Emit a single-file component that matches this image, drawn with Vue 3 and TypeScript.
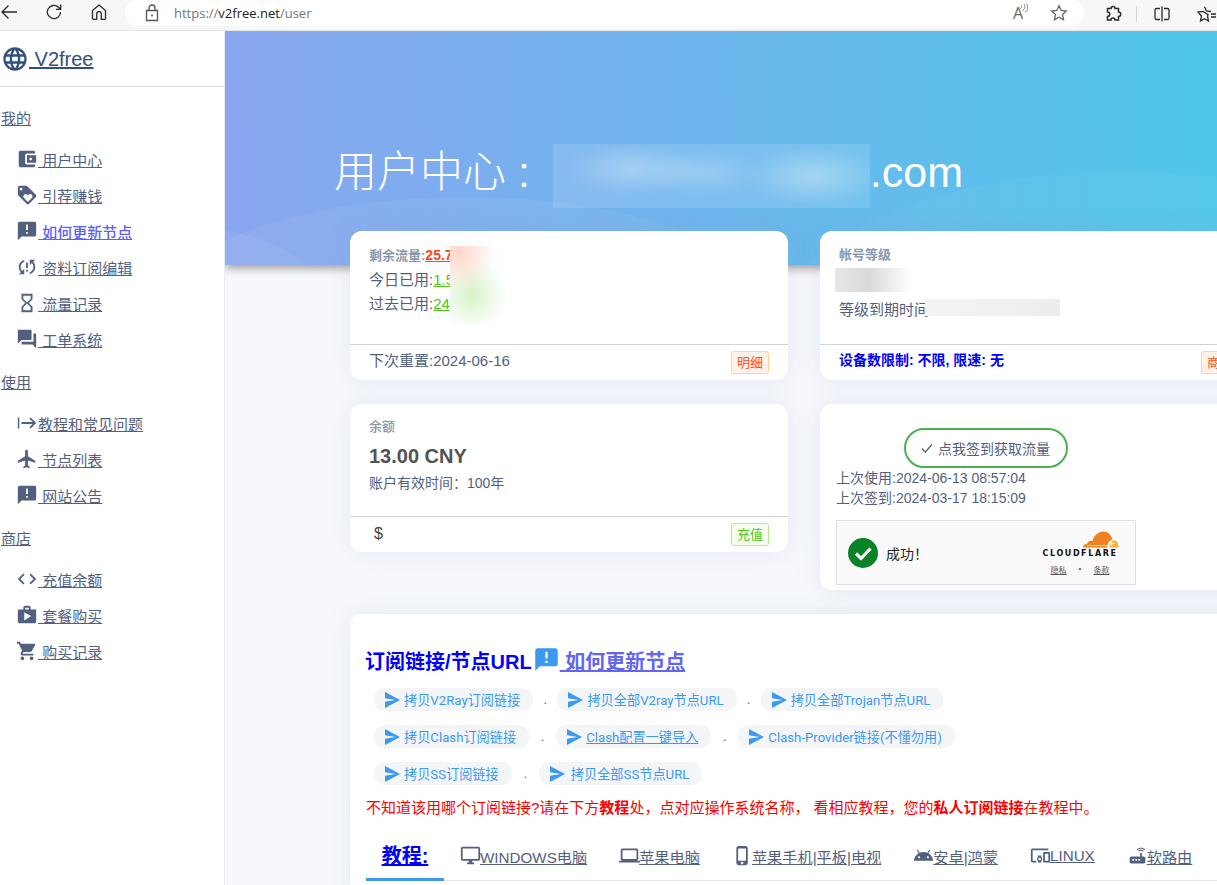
<script setup lang="ts">
interface NavItem { text: string; icon: string; active?: boolean; tight?: boolean }
interface NavGroup { title: string; items: NavItem[] }

const P = {
  wallet: 'M21 18v1c0 1.1-.9 2-2 2H5c-1.11 0-2-.9-2-2V5c0-1.1.89-2 2-2h14c1.1 0 2 .9 2 2v1h-9c-1.11 0-2 .9-2 2v8c0 1.1.89 2 2 2h9zm-9-2h10V8H12v8zm4-2.5c-.83 0-1.5-.67-1.5-1.5s.67-1.5 1.5-1.5 1.5.67 1.5 1.5-.67 1.5-1.5 1.5z',
  loyalty: 'M21.41 11.58l-9-9C12.05 2.22 11.55 2 11 2H4c-1.1 0-2 .9-2 2v7c0 .55.22 1.05.59 1.42l9 9c.36.36.86.58 1.41.58.55 0 1.05-.22 1.41-.59l7-7c.37-.36.59-.86.59-1.41 0-.55-.23-1.06-.59-1.42zM5.5 7C4.67 7 4 6.33 4 5.5S4.67 4 5.5 4 7 4.67 7 5.5 6.33 7 5.5 7zm11.77 8.27L13 19.54l-4.27-4.27C8.28 14.81 8 14.19 8 13.5c0-1.38 1.12-2.5 2.5-2.5.69 0 1.32.28 1.77.74l.73.72.73-.73c.45-.45 1.08-.73 1.77-.73 1.38 0 2.5 1.12 2.5 2.5 0 .69-.28 1.32-.73 1.77z',
  announce: 'M20 2H4c-1.1 0-1.99.9-1.99 2L2 22l4-4h14c1.1 0 2-.9 2-2V4c0-1.1-.9-2-2-2zm-7 9h-2V5h2v6zm0 4h-2v-2h2v2z',
  sync: 'M3 12c0 2.21.91 4.2 2.36 5.64L3 20h6v-6l-2.24 2.24C5.68 15.15 5 13.66 5 12c0-2.61 1.67-4.83 4-5.65V4.26C5.55 5.15 3 8.27 3 12zm8 5h2v-2h-2v2zM21 4h-6v6l2.24-2.24C18.32 8.85 19 10.34 19 12c0 2.61-1.67 4.83-4 5.65v2.09c3.45-.89 6-4.01 6-7.74 0-2.21-.91-4.2-2.36-5.64L21 4zm-10 9h2V7h-2v6z',
  hourglass: 'M6 2v6h.01L6 8.01 10 12l-4 4 .01.01H6V22h12v-5.99h-.01L18 16l-4-4 4-3.99-.01-.01H18V2H6zm10 14.5V20H8v-3.5l4-4 4 4zm-4-5l-4-4V4h8v3.5l-4 4z',
  forum: 'M21 6h-2v9H6v2c0 .55.45 1 1 1h11l4 4V7c0-.55-.45-1-1-1zm-4 6V3c0-.55-.45-1-1-1H3c-.55 0-1 .45-1 1v14l4-4h10c.55 0 1-.45 1-1z',
  tab: 'M2 6h1.6v12H2zM6 11h12.2l-3.6-3.6L16 6l6 6-6 6-1.4-1.4 3.6-3.6H6z',
  flight: 'M21 16v-2l-8-5V3.5c0-.83-.67-1.5-1.5-1.5S10 2.67 10 3.5V9l-8 5v2l8-2.5V19l-2 1.5V22l3.5-1 3.5 1v-1.5L13 19v-5.5l8 2.5z',
  code: 'M9.4 16.6L4.8 12l4.6-4.6L8 6l-6 6 6 6 1.4-1.4zm5.2 0l4.6-4.6-4.6-4.6L16 6l6 6-6 6-1.4-1.4z',
  shop: 'M16 6V4c0-1.11-.89-2-2-2h-4c-1.11 0-2 .89-2 2v2H2v13c0 1.11.89 2 2 2h16c1.11 0 2-.89 2-2V6h-6zm-6-2h4v2h-4V4zM9 18V9l7.5 4L9 18z',
  cart: 'M7 18c-1.1 0-1.99.9-1.99 2S5.9 22 7 22s2-.9 2-2-.9-2-2-2zM1 2v2h2l3.6 7.59-1.35 2.45c-.16.28-.25.61-.25.96 0 1.1.9 2 2 2h12v-2H7.42c-.14 0-.25-.11-.25-.25l.03-.12.9-1.63h7.45c.75 0 1.41-.41 1.75-1.03l3.58-6.49c.08-.14.12-.31.12-.48 0-.55-.45-1-1-1H5.21l-.94-2H1zm16 16c-1.1 0-1.99.9-1.99 2s.89 2 1.99 2 2-.9 2-2-.9-2-2-2z',
  globe: 'M11.99 2C6.47 2 2 6.48 2 12s4.47 10 9.99 10C17.52 22 22 17.52 22 12S17.52 2 11.99 2zm6.93 6h-2.95c-.32-1.25-.78-2.45-1.38-3.56 1.84.63 3.37 1.91 4.33 3.56zM12 4.04c.83 1.2 1.48 2.53 1.91 3.96h-3.82c.43-1.43 1.08-2.76 1.91-3.96zM4.26 14C4.1 13.36 4 12.69 4 12s.1-1.36.26-2h3.38c-.08.66-.14 1.32-.14 2 0 .68.06 1.34.14 2H4.26zm.82 2h2.95c.32 1.25.78 2.45 1.38 3.56-1.84-.63-3.37-1.9-4.33-3.56zm2.95-8H5.08c.96-1.66 2.49-2.93 4.33-3.56C8.81 5.55 8.35 6.75 8.03 8zM12 19.96c-.83-1.2-1.48-2.53-1.91-3.96h3.82c-.43 1.43-1.08 2.76-1.91 3.96zM14.34 14H9.66c-.09-.66-.16-1.32-.16-2 0-.68.07-1.35.16-2h4.68c.09.65.16 1.32.16 2 0 .68-.07 1.34-.16 2zm.25 5.56c.6-1.11 1.06-2.31 1.38-3.56h2.95c-.96 1.65-2.49 2.93-4.33 3.56zM16.36 14c.08-.66.14-1.32.14-2 0-.68-.06-1.34-.14-2h3.38c.16.64.26 1.31.26 2s-.1 1.36-.26 2h-3.38z',
  send: 'M2.01 21L23 12 2.01 3 2 10l15 2-15 2z',
  desktop: 'M21 2H3c-1.1 0-2 .9-2 2v12c0 1.1.9 2 2 2h7v2H8v2h8v-2h-2v-2h7c1.1 0 2-.9 2-2V4c0-1.1-.9-2-2-2zm0 14H3V4h18v12z',
  laptop: 'M20 18c1.1 0 1.99-.9 1.99-2L22 6c0-1.1-.9-2-2-2H4c-1.1 0-2 .9-2 2v10c0 1.1.9 2 2 2H0v2h24v-2h-4zM4 6h16v10H4V6z',
  phone: 'M15.5 1h-8C6.12 1 5 2.12 5 3.5v17C5 21.88 6.12 23 7.5 23h8c1.38 0 2.5-1.12 2.5-2.5v-17C18 2.12 16.88 1 15.5 1zm-4 21c-.83 0-1.5-.67-1.5-1.5s.67-1.5 1.5-1.5 1.5.67 1.5 1.5-.67 1.5-1.5 1.5zm4.5-4H7V4h9v14z',
  android: 'M17.6 9.48l1.84-3.18c.16-.31.04-.69-.26-.85-.29-.15-.65-.06-.83.22l-1.88 3.24c-2.86-1.21-6.08-1.21-8.94 0L5.65 5.67c-.19-.29-.58-.38-.87-.2-.28.18-.37.54-.22.83L6.4 9.48C3.3 11.25 1.28 14.44 1 18h22c-.28-3.56-2.3-6.75-5.4-8.52zM7 15.25c-.69 0-1.25-.56-1.25-1.25s.56-1.25 1.25-1.25 1.25.56 1.25 1.25-.56 1.25-1.25 1.25zm10 0c-.69 0-1.25-.56-1.25-1.25s.56-1.25 1.25-1.25 1.25.56 1.25 1.25-.56 1.25-1.25 1.25z',
  devices: 'M3 6h18V4H3c-1.1 0-2 .9-2 2v12c0 1.1.9 2 2 2h4v-2H3V6zm10 6H9v1.78c-.61.55-1 1.33-1 2.22s.39 1.67 1 2.22V20h4v-1.78c.61-.55 1-1.34 1-2.22s-.39-1.67-1-2.22V12zm-2 5.5c-.83 0-1.5-.67-1.5-1.5s.67-1.5 1.5-1.5 1.5.67 1.5 1.5-.67 1.5-1.5 1.5zM22 8h-6c-.5 0-1 .5-1 1v10c0 .5.5 1 1 1h6c.5 0 1-.5 1-1V9c0-.5-.5-1-1-1zm-1 10h-4v-8h4v8z',
  router: 'M20.2 5.9l.8-.8C19.6 3.7 17.8 3 16 3s-3.6.7-5 2.1l.8.8C13 4.8 14.5 4.2 16 4.2s3 .6 4.2 1.7zm-.9.8c-.9-.9-2.1-1.4-3.3-1.4s-2.4.5-3.3 1.4l.8.8c.7-.7 1.6-1 2.5-1 .9 0 1.8.3 2.5 1l.8-.8zM19 13h-2V9h-2v4H5c-1.1 0-2 .9-2 2v4c0 1.1.9 2 2 2h14c1.1 0 2-.9 2-2v-4c0-1.1-.9-2-2-2zM8 18H6v-2h2v2zm3.5 0h-2v-2h2v2zm3.5 0h-2v-2h2v2z'
}

const groups: NavGroup[] = [
  { title: '我的', items: [
    { text: '用户中心', icon: P.wallet },
    { text: '引荐赚钱', icon: P.loyalty },
    { text: '如何更新节点', icon: P.announce, active: true },
    { text: '资料订阅编辑', icon: P.sync },
    { text: '流量记录', icon: P.hourglass },
    { text: '工单系统', icon: P.forum }
  ] },
  { title: '使用', items: [
    { text: '教程和常见问题', icon: P.tab, tight: true },
    { text: '节点列表', icon: P.flight },
    { text: '网站公告', icon: P.announce }
  ] },
  { title: '商店', items: [
    { text: '充值余额', icon: P.code },
    { text: '套餐购买', icon: P.shop },
    { text: '购买记录', icon: P.cart }
  ] }
]

const navLabel = (it: NavItem): string => (it.tight ? it.text : '\u00a0' + it.text)

interface LinkBtn { text: string; link?: boolean; pad?: boolean; wide?: boolean }
const linkRows: LinkBtn[][] = [
  [{ text: '拷贝V2Ray订阅链接' }, { text: '拷贝全部V2ray节点URL' }, { text: '拷贝全部Trojan节点URL' }],
  [{ text: '拷贝Clash订阅链接' }, { text: 'Clash配置一键导入', link: true, wide: true }, { text: 'Clash-Provider链接(不懂勿用)', wide: true }],
  [{ text: '拷贝SS订阅链接' }, { text: '拷贝全部SS节点URL', pad: true, wide: true }]
]

const tabs = [
  { text: 'WINDOWS电脑', icon: P.desktop },
  { text: '苹果电脑', icon: P.laptop },
  { text: '苹果手机|平板|电视', icon: P.phone },
  { text: '安卓|鸿蒙', icon: P.android },
  { text: 'LINUX', icon: P.devices },
  { text: '软路由', icon: P.router }
]
</script>

<template>
  <div class="page">
    <header class="chrome">
      <svg class="c-ic back" width="18" height="18" viewBox="0 0 18 18"><path d="M17 9H2M8.5 2.5 2 9l6.5 6.5" /></svg>
      <svg class="c-ic reload" width="18" height="18" viewBox="0 0 18 18"><path d="M15.5 9a6.6 6.6 0 1 1-2-4.7L15.5 6.2M15.7 1.6v4.8h-4.8" /></svg>
      <svg class="c-ic home" width="18" height="18" viewBox="0 0 18 18"><path d="M2.5 7.6 9 2l6.500 5.600V15.500a.8.8 0 0 1-.8.8H11.300V11a2.300 2.300 0 0 0-4.600 0v5.300H3.300a.8.8 0 0 1-.8-.8z" /></svg>
      <div class="omni">
        <svg class="c-ic lock" width="14" height="18" viewBox="0 0 14 18"><path d="M1.500 6.500h11v10h-11zM4 6.500V4a3 3 0 0 1 6 0v2.500" /><circle cx="7" cy="11.500" r="1" fill="#555" stroke="none" /></svg>
        <span class="url"><i>https://</i>v2free.net<i>/user</i></span>
        <span class="omni-right">
          <span class="aloud">A<svg width="9" height="12" viewBox="0 0 9 12"><path d="M1 6.500c1.500-.5 2-1.500 1.500-3M3.500 8.500C6 7.500 6.500 4.500 5 2M6 10.500c3-2 3.500-6 1.500-9" /></svg></span>
          <svg class="c-ic" width="18" height="18" viewBox="0 0 18 18"><path d="m9 1.800 2.200 4.700 5.100.6-3.800 3.500 1 5.100L9 13.200l-4.500 2.500 1-5.100-3.800-3.500 5.100-.6z" /></svg>
        </span>
      </div>
      <div class="c-right">
        <svg class="c-ic ext" width="18" height="18" viewBox="0 0 18 18"><path d="M7 3.500a2 2 0 0 1 4 0h3.500V7a2.200 2.200 0 0 1 0 4.400V15H11a2 2 0 0 0-4 0H3.500v-3.500a2.200 2.200 0 0 0 0-4.400V3.500z" stroke-width="1.500" /></svg>
        <span class="c-sep"></span>
        <svg class="c-ic split" width="18" height="18" viewBox="0 0 18 18"><path d="M9 1.500v15M7 3.500H3.500a1.500 1.500 0 0 0-1.500 1.500v8a1.500 1.500 0 0 0 1.500 1.500H7M11 3.500h3.500A1.500 1.500 0 0 1 16 5v8a1.500 1.500 0 0 1-1.500 1.500H11" /></svg>
        <svg class="c-ic fav" width="20" height="18" viewBox="0 0 20 18"><path d="M7.500 1.800 9.500 6l4.500.5M11 9.500 10.500 11l1 5-4-2.200-4 2.200 1-5L1 7l5-.6zM14 9h5M14 12h5" /></svg>
      </div>
    </header>

    <div class="body">
      <aside class="side">
        <div class="brand">
          <svg width="28" height="28" viewBox="0 0 24 24"><path fill="#32507e" :d="P.globe" /></svg>
          <a href="#" class="brand-link"> V2free</a>
        </div>
        <div class="nav">
          <section v-for="g in groups" :key="g.title" class="group">
            <div class="row head"><a href="#">{{ g.title }}</a></div>
            <ul>
              <li v-for="it in g.items" :key="it.text" class="row item">
                <svg width="22" height="22" viewBox="0 0 24 24"><path fill="#525f7f" :d="it.icon" /></svg>
                <a href="#" :class="{ on: it.active }">{{ navLabel(it) }}</a>
              </li>
            </ul>
          </section>
        </div>
      </aside>

      <main class="main">
        <section class="hero">
          <div class="decor">
            <span class="arc a1"></span>
            <span class="arc a2"></span>
            <span class="arc a3"></span>
          </div>
          <h1>用户中心 : <span class="mask-title"></span>.com</h1>
        </section>

        <div class="grid">
          <article class="card c1">
            <div class="card-body">
              <div class="label line">剩余流量:<a class="red" href="#">25.7</a></div>
              <div class="line">今日已用:<a class="green" href="#">1.5</a></div>
              <div class="line">过去已用:<a class="green" href="#">24</a></div>
              <span class="mask m-flow"></span>
            </div>
            <div class="card-foot">
              <span class="foot-text">下次重置:2024-06-16</span>
              <span class="tag orange">明细</span>
            </div>
          </article>

          <article class="card c1">
            <div class="card-body">
              <div class="label line">帐号等级</div>
              <span class="mask m-level"></span>
              <div class="line expire">等级到期时间</div>
              <span class="mask m-expire"></span>
            </div>
            <div class="card-foot">
              <b class="blue foot-text">设备数限制: 不限, 限速: 无</b>
              <span class="tag orange">商店</span>
            </div>
          </article>

          <article class="card c3">
            <div class="card-body">
              <div class="label bal">余额</div>
              <div class="amount">13.00 CNY</div>
              <div class="valid">账户有效时间：100年</div>
            </div>
            <div class="card-foot low">
              <span class="dollar">$</span>
              <span class="tag lime">充值</span>
            </div>
          </article>

          <article class="card c4">
            <button class="checkin">
              <svg width="12" height="12" viewBox="0 0 12 12"><path d="M1 6.500 4.300 10 11 2.500" fill="none" stroke="#525f7f" stroke-width="1.200" /></svg>
              点我签到获取流量
            </button>
            <div class="times">上次使用:2024-06-13 08:57:04</div>
            <div class="times">上次签到:2024-03-17 18:15:09</div>
            <div class="turnstile">
              <svg class="ok" width="30" height="30" viewBox="0 0 30 30"><circle cx="15" cy="15" r="15" fill="#0a8227" /><path d="M8 15.500 13 20.500 22.500 10.500" fill="none" stroke="#fff" stroke-width="3.200" /></svg>
              <span class="ok-text">成功！</span>
              <div class="cf">
                <svg width="37" height="17" viewBox="0 0 37 17">
                  <path fill="#f38020" d="M1 16.500C1 14 3 12.600 5 13 5.500 10.500 8 9 10.500 10 12 4 17 .5 21 .5 26 .5 29.500 4 30.300 8.500 28 9 26.500 11 26 13L25 16.500Z" />
                  <path fill="#faae40" d="M27 16.500 27.800 13C28.500 10.500 30 9.500 32 9.500 35 9.500 36.500 12 36.500 16.500Z" />
                  <path fill="#fff" d="M5 14.200H27.500V15H5ZM29.500 9.500 30.500 12 34 12.800 30.500 13.300 29.500 15.500 28.800 13.300 26 12.800 28.800 12Z" />
                </svg>
                <div class="cf-word">CLOUDFLARE</div>
                <div class="cf-links"><u>隐私</u><span>•</span><u>条款</u></div>
              </div>
            </div>
          </article>
        </div>

        <section class="panel">
          <h3 class="sub-title">
            <span>订阅链接/节点URL</span>
            <svg width="27" height="27" viewBox="0 0 24 24"><path fill="#3b99f0" :d="P.announce" /></svg>
            <a href="#">&nbsp;如何更新节点</a>
          </h3>
          <div v-for="(row, r) in linkRows" :key="r" class="btn-row">
            <template v-for="(b, i) in row" :key="b.text">
              <span v-if="i > 0" class="dot" :class="{ wide: b.wide }">.</span>
              <a class="copy" :class="{ ul: b.link, pad: b.pad }" href="#">
                <svg width="15" height="16" viewBox="2 3 21 18" preserveAspectRatio="none"><path fill="#3b99f0" :d="P.send" /></svg>
                <span>{{ b.text }}</span>
              </a>
            </template>
          </div>
          <p class="notice">不知道该用哪个订阅链接?请在下方<b>教程</b>处，点对应操作系统名称， 看相应教程，您的<b>私人订阅链接</b>在教程中。</p>
          <nav class="tabs">
            <a class="tab-title" href="#"><b>教程:</b></a>
            <a v-for="t in tabs" :key="t.text" class="tab" href="#">
              <svg width="21" height="21" viewBox="0 0 24 24"><path fill="#525f7f" :d="t.icon" /></svg>
              <span>{{ t.text }}</span>
            </a>
          </nav>
        </section>
      </main>
    </div>
  </div>
</template>

<style>
html, body { margin: 0; overflow: hidden; background: #fff; }
</style>

<style scoped>
* { box-sizing: border-box; }
.page {
  width: 1217px; height: 885px; overflow: hidden; display: flex; flex-direction: column;
  font-family: "Liberation Sans", "Noto Sans CJK SC", sans-serif; color: #525f7f; font-size: 15px;
}
a { color: inherit; }
.chrome { height: 31px; flex: none; background: #f7f7f7; border-bottom: 1px solid #e6e6e6; display: flex; align-items: flex-start; }
.c-ic { fill: none; stroke: #2a2a2a; stroke-width: 1.3; flex: none; }
.back { margin: 3px 0 0 0; }
.reload { margin: 3px 0 0 27px; }
.home { margin: 3px 0 0 27px; }
.omni { width: 960px; height: 27px; margin-left: 17px; background: #fff; border-radius: 14px; margin-top: -1px; display: flex; align-items: center; padding: 1px 16px 0 20px; }
.lock { stroke: #555; }
.url { margin-left: 15px; color: #222; font-family: "Open Sans", "Liberation Sans", sans-serif; font-size: 13px; }
.url i { font-style: normal; color: #767676; }
.omni-right { margin-left: auto; display: flex; align-items: center; gap: 22px; }
.omni-right .c-ic { stroke: #666; }
.aloud { font-size: 16px; color: #666; display: flex; align-items: flex-start; font-family: "Open Sans", sans-serif; }
.aloud svg { fill: none; stroke: #777; stroke-width: .9; margin-left: -4px; }
.c-right { display: flex; align-items: center; margin-left: 20px; height: 27px; }
.ext { margin-right: 14px; }
.c-sep { width: 1px; height: 16px; background: #d4d4d4; margin-right: 16px; }
.fav { margin-left: 26px; }

.body { flex: 1; display: flex; min-height: 0; }
.side { width: 225px; flex: none; background: #fff; border-right: 1px solid #e9ecef; }
.brand { height: 56px; padding-top: 1px; border-bottom: 1px solid #dcdcdc; display: flex; align-items: center; padding-left: 1px; }
.brand-link { color: #32507e; font-size: 20px; white-space: pre; }
.nav { padding-top: 12px; display: flex; flex-direction: column; gap: 6px; }
.group ul { list-style: none; margin: 6px 0 0; padding: 0; }
.row { height: 36px; display: flex; align-items: center; }
.head { padding-left: 1px; font-size: 15px; }
.item { padding-left: 16px; }
.item svg { flex: none; }
.item a { white-space: pre; }
.on { color: #5e5ef5; font-weight: 500; }

.main { flex: 1; min-width: 0; background: #f6f8fd; overflow: hidden; }
.hero {
  height: 234px; padding: 115px 0 0 109px;
  background: linear-gradient(87deg, #8aa6f0 0%, #4fc7ea 100%);
  box-shadow: 0 3px 9px rgba(90, 70, 60, .55);
  position: relative;
}
.decor { position: absolute; inset: 0; overflow: hidden; }
.arc { position: absolute; display: block; border-radius: 50%; background: rgba(255, 255, 255, .05); }
.a1 { left: -60px; top: 166px; width: 600px; height: 220px; }
.a2 { left: 560px; top: 140px; width: 680px; height: 300px; background: rgba(255, 255, 255, .035); }
.a3 { left: -200px; top: 195px; width: 300px; height: 150px; }
.hero h1 { position: relative; margin: 0; font-size: 43px; font-weight: 300; line-height: 52px; color: #fff; display: flex; align-items: center; white-space: pre; font-family: "Liberation Sans", "Noto Sans CJK SC", sans-serif; }
.mask-title {
  width: 317px; height: 64px; margin: -2px 0 -10px 11px;
  background:
    radial-gradient(ellipse 70px 26px at 25% 40%, rgba(255, 255, 255, .28), rgba(255, 255, 255, 0)),
    radial-gradient(ellipse 60px 24px at 48% 45%, rgba(255, 255, 255, .2), rgba(255, 255, 255, 0)),
    radial-gradient(ellipse 70px 30px at 82% 50%, rgba(255, 255, 255, .32), rgba(255, 255, 255, 0)),
    rgba(255, 255, 255, .12);
}

.grid { position: relative; margin: -34px 0 0 125px; width: 908px; display: grid; grid-template-columns: 438px 438px; column-gap: 32px; row-gap: 24px; align-items: start; }
.card { background: #fff; border-radius: 12px; box-shadow: 0 0 24px rgba(136, 152, 170, .16); display: flex; flex-direction: column; position: relative; }
.c1 { height: 149px; }
.c3 { height: 148px; }
.c4 { height: 186px; padding: 24px 0 0 16px; }
.card-body { flex: 1; padding: 12px 19px 0; position: relative; }
.line { line-height: 24px; font-size: 15px; }
.label { color: #8898aa; font-weight: 700; font-size: 13px; }
.label.line { font-size: 13px; }
.label a { font-size: 14px; }
.red { color: #f5481f; }
.green { color: #52c41a; }
.card-foot { height: 36px; flex: none; margin: 0; padding: 0 19px 1px; border-top: 1px solid #d2d2d2; display: flex; align-items: center; justify-content: space-between; }
.foot-text { margin-bottom: 6px; }
.tag { width: 38px; height: 23px; font-size: 13px; line-height: 21px; text-align: center; border-radius: 3px; border: 1px solid; flex: none; }
.orange { background: #fff2e8; border-color: #ffd591; color: #fa541c; }
.lime { background: #f6ffed; border-color: #b7eb8f; color: #52c41a; }
.blue { color: #0000ff; font-size: 14px; }
.mask { position: absolute; display: block; }
.m-flow { left: 100px; top: 15px; width: 57px; height: 78px; background: radial-gradient(circle at 15% 8%, #ffd5c8 0, rgba(255,255,255,0) 42%), radial-gradient(circle at 38% 62%, #d8f2c7 0, rgba(255,255,255,0) 58%), #fdfeff; }
.m-level { left: 15px; top: 37px; width: 76px; height: 24px; background: linear-gradient(90deg, #e6e6e6, #d9d9d9 45%, #fff); }
.expire { margin-top: 31px; }
.m-expire { left: 105px; top: 68px; width: 135px; height: 17px; background: linear-gradient(90deg, #f3f3f3, #f1f1f1 50%, #ececee); }
.bal { line-height: 22px; font-size: 13px; font-weight: 500; }
.amount { margin-top: 3px; font-size: 20px; font-weight: 700; color: #525252; line-height: 30px; }
.valid { font-size: 14px; line-height: 22px; margin-top: 1px; }
.low { height: 36px; }
.dollar { font-size: 16px; margin-left: 5px; color: #444; }
.checkin { display: flex; align-items: center; gap: 5px; width: 164px; height: 40px; margin-left: 68px; padding: 0 0 0 15px; border: 2px solid #4caf50; border-radius: 20px; background: #fff; color: #525f7f; font: 14px "Liberation Sans", "Noto Sans CJK SC", sans-serif; white-space: nowrap; }
.times { font-size: 14px; line-height: 20px; white-space: nowrap; }
.turnstile { width: 300px; height: 65px; margin-top: 12px; border: 1px solid #e0e0e0; background: #fafafa; display: flex; align-items: center; padding-left: 11px; position: relative; color: #232323; }
.ok { flex: none; }
.ok-text { margin-left: 8px; font-size: 14px; }
.cf { margin-left: auto; margin-right: 16px; width: 78px; display: flex; flex-direction: column; align-items: center; }
.cf svg { align-self: flex-end; }
.cf-word { font-size: 8px; font-weight: 700; letter-spacing: 1.600px; line-height: 8px; color: #111; font-family: "DejaVu Sans", sans-serif; white-space: nowrap; margin-top: 2px; }
.cf-links { font-size: 8px; display: flex; gap: 12px; margin-top: 6px; color: #555; }

.panel { margin: 24px 0 0 125px; width: 908px; height: 300px; background: #fff; border-radius: 10px; padding: 30px 16px 0; box-shadow: 0 0 24px rgba(136, 152, 170, .16); }
.sub-title { margin: 0 0 12px -1px; height: 32px; display: flex; align-items: center; font-size: 20px; font-weight: 700; color: #0000ff; white-space: pre; }
.sub-title svg { margin: 0 0 2px 1px; }
.sub-title a { color: #6366f1; font-weight: 700; }
.btn-row { height: 23px; margin: 0 0 14px; padding-left: 8px; display: flex; align-items: center; }
.dot { width: 24px; text-align: center; font-size: 13px; line-height: 28px; color: #525f7f; }
.dot.wide { width: 27px; }
.copy { height: 23px; border-radius: 10px; background: #f4f5f7; color: #3b99f0; display: flex; align-items: center; padding: 0 13px 0 11px; font-size: 13.2px; text-decoration: none; white-space: nowrap; font-family: Roboto, "Noto Sans CJK SC", sans-serif; }
.copy svg { flex: none; }
.copy span { margin-left: 4px; }
.copy.ul span { text-decoration: underline; }
.copy.pad span { margin-left: 6px; }
.notice { margin: -2px 0 0; height: 22px; line-height: 22px; color: #ff0000; font-size: 15px; white-space: nowrap; }
.tabs { margin-top: 12px; height: 50px; border-bottom: 1px solid #e4e4e4; display: flex; align-items: center; }
.tab-title { height: 50px; width: 78px; flex: none; border-bottom: 3px solid #3b99f0; color: #0000ff; text-align: center; font-size: 20px; line-height: 50px; }
.tab { padding: 0 16px; height: 50px; display: flex; align-items: center; font-size: 15.2px; white-space: nowrap; }
.tab svg { flex: none; margin-right: -1px; }
</style>
